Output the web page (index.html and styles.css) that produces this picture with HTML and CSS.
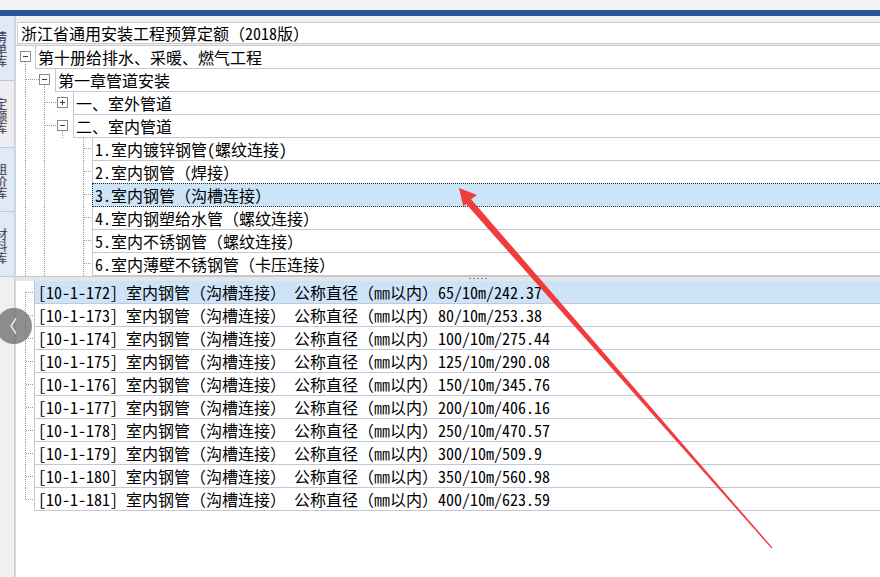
FILE: index.html
```html
<!DOCTYPE html>
<html lang="zh-CN">
<head>
<meta charset="utf-8">
<title>定额库</title>
<link rel="stylesheet" href="styles.css">
</head>
<body>
<div class="top"></div>
<div class="bar"></div>
<div class="content">
  <aside class="sidebar">
    <div class="tab t1"><span>清</span><span>单</span><span>库</span></div>
    <div class="tab t2"><span>定</span><span>额</span><span>库</span></div>
    <div class="tab t3"><span>组</span><span>价</span><span>库</span></div>
    <div class="tab t4"><span>材</span><span>料</span><span>库</span></div>
    <div class="tabrest"></div>
  </aside>
  <main class="main">
    <div class="gap6"></div>
    <div class="hdr">浙江省通用安装工程预算定额（2018版）</div>
    <div class="hgap"></div>
    <div class="tree">
      <div class="row">
        <svg class="ind" width="19" height="23"><path class="dot" d="M9.5 16V23"/><rect class="exp" x="4.5" y="5.5" width="10" height="10"/><path class="sign" d="M7 10.5H12"/></svg>
        <div class="cell">第十册给排水、采暖、燃气工程</div>
      </div>
      <div class="row">
        <svg class="ind" width="39" height="23"><path class="dot" d="M9.5 0V23M10 10.5H23M28.5 16V23"/><rect class="exp" x="23.5" y="5.5" width="10" height="10"/><path class="sign" d="M26 10.5H31"/></svg>
        <div class="cell">第一章管道安装</div>
      </div>
      <div class="row">
        <svg class="ind" width="57" height="23"><path class="dot" d="M9.5 0V23M28.5 0V23M29 10.5H41"/><rect class="exp" x="41.5" y="5.5" width="10" height="10"/><path class="sign" d="M44 10.5H49M46.5 8V13"/></svg>
        <div class="cell">一、室外管道</div>
      </div>
      <div class="row">
        <svg class="ind" width="57" height="23"><path class="dot" d="M9.5 0V23M28.5 0V23M29 10.5H41M46.5 16V23"/><rect class="exp" x="41.5" y="5.5" width="10" height="10"/><path class="sign" d="M44 10.5H49"/></svg>
        <div class="cell">二、室内管道</div>
      </div>
      <div class="row">
        <svg class="ind" width="76" height="23"><path class="dot" d="M9.5 0V23M28.5 0V23M67.5 0V23M68 10.5H76"/></svg>
        <div class="cell">1.室内镀锌钢管(螺纹连接)</div>
      </div>
      <div class="row">
        <svg class="ind" width="76" height="23"><path class="dot" d="M9.5 0V23M28.5 0V23M67.5 0V23M68 10.5H76"/></svg>
        <div class="cell">2.室内钢管（焊接）</div>
      </div>
      <div class="row">
        <svg class="ind" width="76" height="23"><path class="dot" d="M9.5 0V23M28.5 0V23M67.5 0V23M68 10.5H76"/></svg>
        <div class="cell sel">3.室内钢管（沟槽连接）</div>
      </div>
      <div class="row">
        <svg class="ind" width="76" height="23"><path class="dot" d="M9.5 0V23M28.5 0V23M67.5 0V23M68 10.5H76"/></svg>
        <div class="cell">4.室内钢塑给水管（螺纹连接）</div>
      </div>
      <div class="row">
        <svg class="ind" width="76" height="23"><path class="dot" d="M9.5 0V23M28.5 0V23M67.5 0V23M68 10.5H76"/></svg>
        <div class="cell">5.室内不锈钢管（螺纹连接）</div>
      </div>
      <div class="row">
        <svg class="ind" width="76" height="23"><path class="dot" d="M9.5 0V23M28.5 0V23M67.5 0V23M68 10.5H76"/></svg>
        <div class="cell">6.室内薄壁不锈钢管（卡压连接）</div>
      </div>
    </div>
    <div class="splitter"><span class="grip"></span></div>
    <div class="list">
      <div class="row">
        <svg class="ind" width="18" height="23"><path class="dot" d="M9.5 11V23M10 11.5H18"/></svg>
        <div class="cell hl">[10-1-172] 室内钢管（沟槽连接） 公称直径（㎜以内）65/10m/242.37</div>
      </div>
      <div class="row">
        <svg class="ind" width="18" height="23"><path class="dot" d="M9.5 0V23M10 11.5H18"/></svg>
        <div class="cell">[10-1-173] 室内钢管（沟槽连接） 公称直径（㎜以内）80/10m/253.38</div>
      </div>
      <div class="row">
        <svg class="ind" width="18" height="23"><path class="dot" d="M9.5 0V23M10 11.5H18"/></svg>
        <div class="cell">[10-1-174] 室内钢管（沟槽连接） 公称直径（㎜以内）100/10m/275.44</div>
      </div>
      <div class="row">
        <svg class="ind" width="18" height="23"><path class="dot" d="M9.5 0V23M10 11.5H18"/></svg>
        <div class="cell">[10-1-175] 室内钢管（沟槽连接） 公称直径（㎜以内）125/10m/290.08</div>
      </div>
      <div class="row">
        <svg class="ind" width="18" height="23"><path class="dot" d="M9.5 0V23M10 11.5H18"/></svg>
        <div class="cell">[10-1-176] 室内钢管（沟槽连接） 公称直径（㎜以内）150/10m/345.76</div>
      </div>
      <div class="row">
        <svg class="ind" width="18" height="23"><path class="dot" d="M9.5 0V23M10 11.5H18"/></svg>
        <div class="cell">[10-1-177] 室内钢管（沟槽连接） 公称直径（㎜以内）200/10m/406.16</div>
      </div>
      <div class="row">
        <svg class="ind" width="18" height="23"><path class="dot" d="M9.5 0V23M10 11.5H18"/></svg>
        <div class="cell">[10-1-178] 室内钢管（沟槽连接） 公称直径（㎜以内）250/10m/470.57</div>
      </div>
      <div class="row">
        <svg class="ind" width="18" height="23"><path class="dot" d="M9.5 0V23M10 11.5H18"/></svg>
        <div class="cell">[10-1-179] 室内钢管（沟槽连接） 公称直径（㎜以内）300/10m/509.9</div>
      </div>
      <div class="row">
        <svg class="ind" width="18" height="23"><path class="dot" d="M9.5 0V23M10 11.5H18"/></svg>
        <div class="cell">[10-1-180] 室内钢管（沟槽连接） 公称直径（㎜以内）350/10m/560.98</div>
      </div>
      <div class="row">
        <svg class="ind" width="18" height="23"><path class="dot" d="M9.5 0V12M10 11.5H18"/></svg>
        <div class="cell">[10-1-181] 室内钢管（沟槽连接） 公称直径（㎜以内）400/10m/623.59</div>
      </div>
    </div>
  </main>
</div>
<button class="navbtn" type="button" aria-label="收起"><svg width="36" height="36" viewBox="0 0 36 36"><path d="M20 10.5L15 18L20 25.5" fill="none" stroke="#eeeeee" stroke-width="1.4"/></svg></button>
<svg class="arrow" width="880" height="577" viewBox="0 0 880 577"><polygon points="459,188 477,194.9 471.1,199.2 772.5,547.7 771.5,548.5 465.9,203.8 463.4,206.7" fill="#f03c3c"/></svg>
</body>
</html>
```

FILE: styles.css
```css
html, body {
  margin: 0;
  padding: 0;
}
body {
  width: 880px;
  height: 577px;
  overflow: hidden;
  position: relative;
  background: #ffffff;
  color: #000000;
  font-family: "Noto Sans Mono CJK SC", "Noto Sans CJK SC", sans-serif;
  font-size: 16px;
}
.top {
  height: 10px;
  background: #f3f3f3;
}
.bar {
  height: 6px;
  background: #2b579a;
}
.content {
  display: flex;
  height: 561px;
}
.sidebar {
  width: 14px;
  flex: none;
  border-right: 1px solid #c3d0e2;
  background: #f0f0f0;
  display: flex;
  flex-direction: column;
  overflow: hidden;
}
.tab {
  flex: none;
  box-sizing: border-box;
  display: flex;
  flex-direction: column;
  justify-content: center;
  background: #e0e9f6;
  border-bottom: 1px solid #b6cae3;
  font-family: "Noto Sans CJK SC", sans-serif;
  font-size: 12px;
  line-height: 12px;
  color: #34406e;
  text-shadow: 1px 0 0 rgba(226, 140, 60, 0.55);
  overflow: hidden;
}
.tab span {
  display: block;
  margin-left: -5px;
  height: 12px;
}
.t1 { height: 65px; padding-top: 2px; }
.t2 { height: 67px; background: #eeeeee; padding-top: 3px; }
.t3 { height: 64px; padding-top: 2px; }
.t4 { height: 65px; padding-top: 3px; }
.tabrest {
  flex: 1;
  background: #f0f0f0;
}
.main {
  flex: 1;
  min-width: 0;
  border-left: 1px solid #d9d9d9;
  display: flex;
  flex-direction: column;
  overflow: hidden;
}
.gap6 {
  height: 6px;
  flex: none;
  background: #f0f0f0;
}
.hdr {
  flex: none;
  margin-left: 1px;
  height: 20px;
  line-height: 20px;
  padding-left: 3px;
  border: 1px solid #cbcbcb;
  border-right: none;
  white-space: nowrap;
}
.hgap {
  flex: none;
  height: 1px;
  background: #ededed;
}
.tree {
  flex: none;
  border-top: 1px solid #c9c9c9;
}
.row {
  display: flex;
  height: 23px;
}
.ind {
  flex: none;
  display: block;
}
.dot {
  fill: none;
  stroke: #9a9a9a;
  stroke-width: 1;
  stroke-dasharray: 1 1;
}
.exp {
  fill: #ffffff;
  stroke: #8a8a8a;
  stroke-width: 1;
}
.sign {
  fill: none;
  stroke: #3c3c3c;
  stroke-width: 1;
}
.cell {
  flex: 1;
  min-width: 0;
  box-sizing: border-box;
  border-left: 1px solid #c6c6da;
  border-bottom: 1px solid #c6c6da;
  padding-left: 2px;
  line-height: 22px;
  white-space: nowrap;
  overflow: hidden;
}
.cell.sel {
  margin-top: -1px;
  background: #cce4f7;
  border-top: 1px dotted #2a2a2a;
  border-bottom: 1px dotted #2a2a2a;
  border-left: 1px dotted #2a2a2a;
}
.splitter {
  flex: none;
  height: 3px;
  padding: 1px 0 0 453px;
  border-top: 1px solid #c8c8c8;
  background: #e6e6e6;
}
.grip {
  display: block;
  width: 18px;
  height: 1px;
  background: repeating-linear-gradient(90deg, #8c8c8c 0 2px, transparent 2px 4px);
}
.list {
  flex: 1;
  background: #ffffff;
}
.list .cell {
  padding-left: 3px;
}
.cell.hl {
  background: #cde4f8;
}
.navbtn {
  position: absolute;
  left: -4px;
  top: 308px;
  width: 36px;
  height: 36px;
  padding: 0;
  border: none;
  border-radius: 50%;
  background: rgba(112, 112, 112, 0.78);
}
.navbtn svg {
  display: block;
}
.arrow {
  position: absolute;
  left: 0;
  top: 0;
  pointer-events: none;
}
```
